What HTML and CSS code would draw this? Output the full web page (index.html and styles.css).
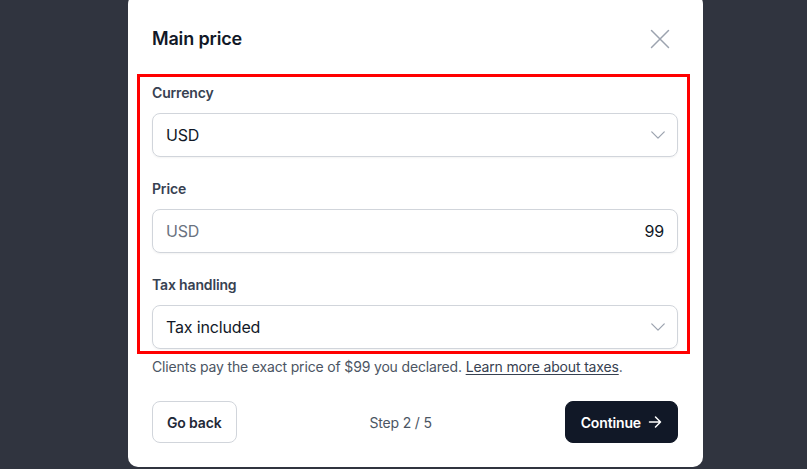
FILE: index.html
```html
<!DOCTYPE html>
<html lang="en">
<head>
<meta charset="utf-8">
<title>Main price</title>
<link rel="stylesheet" href="styles.css">
</head>
<body>
<div class="page">
  <div class="modal">
    <div class="header">
      <h2 class="title">Main price</h2>
      <button class="close" aria-label="Close">
        <svg width="20" height="20" viewBox="0 0 20 20" fill="none" stroke="currentColor" stroke-width="1.5" stroke-linecap="round"><path d="M1.5 1.5 18.5 18.5M18.5 1.5 1.5 18.5"/></svg>
      </button>
    </div>
    <div class="fields">
      <div class="field">
        <label class="label">Currency</label>
        <div class="box">
          <span class="value">USD</span>
          <svg class="chev" width="20" height="20" viewBox="0 0 24 24" fill="none" stroke="currentColor" stroke-width="1.5" stroke-linecap="round" stroke-linejoin="round"><path d="m19.5 8.25-7.5 7.5-7.5-7.5"/></svg>
        </div>
      </div>
      <div class="field">
        <label class="label">Price</label>
        <div class="box">
          <span class="prefix">USD</span>
          <span class="value">99</span>
        </div>
      </div>
      <div class="field">
        <label class="label">Tax handling</label>
        <div class="box">
          <span class="value">Tax included</span>
          <svg class="chev" width="20" height="20" viewBox="0 0 24 24" fill="none" stroke="currentColor" stroke-width="1.5" stroke-linecap="round" stroke-linejoin="round"><path d="m19.5 8.25-7.5 7.5-7.5-7.5"/></svg>
        </div>
      </div>
    </div>
    <p class="help">Clients pay the exact price of $99 you declared. <a class="link" href="#">Learn more about taxes</a>.</p>
    <div class="footer">
      <button class="btn btn-secondary">Go back</button>
      <span class="step">Step 2 / 5</span>
      <button class="btn btn-primary">Continue
        <svg width="16" height="16" viewBox="0 0 16 16" fill="none" stroke="currentColor" stroke-width="1.5" stroke-linecap="round" stroke-linejoin="round"><path d="M2.5 8h11M8.5 3l5 5-5 5"/></svg>
      </button>
    </div>
    <div class="highlight"></div>
  </div>
</div>
</body>
</html>
```

FILE: styles.css
```css
* { box-sizing: border-box; }
html, body {
  margin: 0;
  height: 469px;
  overflow: hidden;
}
body {
  background: #30343f;
  font-family: Inter, "Noto Sans", sans-serif;
  letter-spacing: -0.01em;
  color: #111827;
}
.page {
  padding-left: 128px;
}
.modal {
  position: relative;
  width: 575px;
  margin-top: -6px;
  background: #ffffff;
  border-radius: 10px;
  padding: 31px 25px 24px 24px;
}
.header {
  display: flex;
  align-items: center;
  justify-content: space-between;
}
.title {
  margin: 0;
  font-size: 18px;
  line-height: 28px;
  font-weight: 600;
  color: #111827;
}
.close {
  display: flex;
  padding: 0;
  margin-right: 8px;
  border: 0;
  background: none;
  color: #9ca3af;
}
.fields {
  margin-top: 30px;
  display: flex;
  flex-direction: column;
  gap: 22px;
}
.label {
  display: block;
  font-size: 14px;
  line-height: 20px;
  font-weight: 600;
  color: #374151;
  margin-bottom: 10px;
}
.box {
  height: 44px;
  border: 1px solid #d1d5db;
  border-radius: 8px;
  box-shadow: 0 1px 2px rgba(0, 0, 0, 0.05);
  display: flex;
  align-items: center;
  justify-content: space-between;
  padding: 0 9px 0 13px;
  font-size: 16px;
}
.box .prefix + .value { margin-right: 4px; }
.value { color: #111827; }
.prefix { color: #6b7280; }
.chev { color: #9ca3af; }
.help {
  margin: 8px 0 0;
  font-size: 14px;
  line-height: 20px;
  color: #4b5563;
}
.link {
  color: #374151;
  text-decoration: underline;
  text-underline-offset: 2px;
}
.footer {
  margin-top: 24px;
  display: flex;
  align-items: center;
  justify-content: space-between;
}
.btn {
  height: 42px;
  border-radius: 8px;
  font-family: inherit;
  font-size: 14px;
  font-weight: 600;
  letter-spacing: -0.01em;
  display: flex;
  align-items: center;
  gap: 6px;
  padding: 0 14px;
}
.btn-secondary {
  background: #ffffff;
  border: 1px solid #d1d5db;
  color: #1f2937;
}
.btn-primary {
  background: #111827;
  border: 1px solid #111827;
  color: #ffffff;
  padding: 0 14px 0 15px;
}
.step {
  font-size: 14px;
  color: #4b5563;
}
.highlight {
  position: absolute;
  left: 9px;
  top: 80px;
  width: 553px;
  height: 280px;
  border: 3px solid #ff0000;
  pointer-events: none;
}
```
